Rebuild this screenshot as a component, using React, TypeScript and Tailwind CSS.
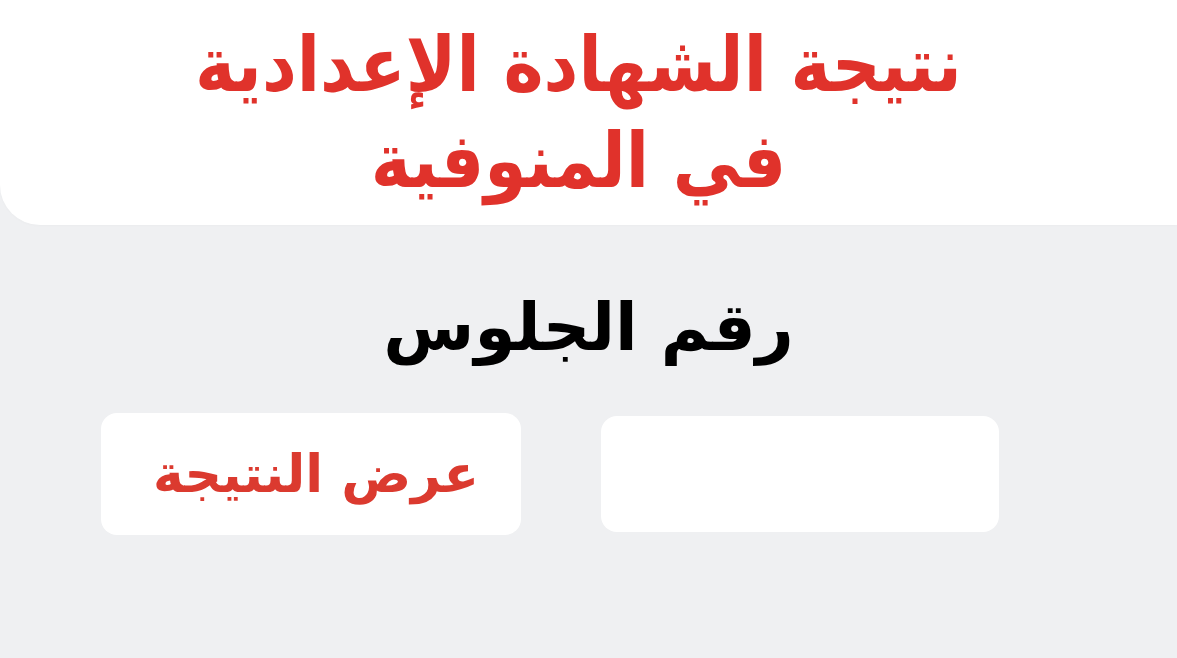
import React from 'react';

const App: React.FC = () => {
  return (
    <div dir="rtl" className="w-[1177px] h-[658px] overflow-hidden bg-[#eff0f2] flex flex-col" style={{ fontFamily: '"DejaVu Sans", sans-serif' }}>
      <header className="h-[225px] bg-white rounded-bl-[40px] flex flex-col items-center justify-center pr-[20px] shadow-[0_1px_3px_rgba(0,0,0,0.02)]">
        <h1 className="text-[#e0322b] font-bold text-[68px] leading-[86px] text-center scale-y-[1.12]">
          نتيجة الشهادة الإعدادية
          <br />
          في المنوفية
        </h1>
      </header>

      <main className="flex flex-col">
        <h2 className="mt-[58px] text-black font-bold text-[66px] leading-[90px] text-center">رقم الجلوس</h2>

        <div className="mt-[40px] flex flex-row items-center pr-[178px] gap-[80px]">
          <input
            type="text"
            className="w-[398px] h-[116px] bg-white rounded-[16px] outline-none"
          />
          <button className="w-[420px] h-[122px] bg-white rounded-[16px] text-[#db3a2f] text-[52px] font-bold flex items-center justify-center pl-[10px]">
            عرض النتيجة
          </button>
        </div>
      </main>
    </div>
  );
};

export default App;
